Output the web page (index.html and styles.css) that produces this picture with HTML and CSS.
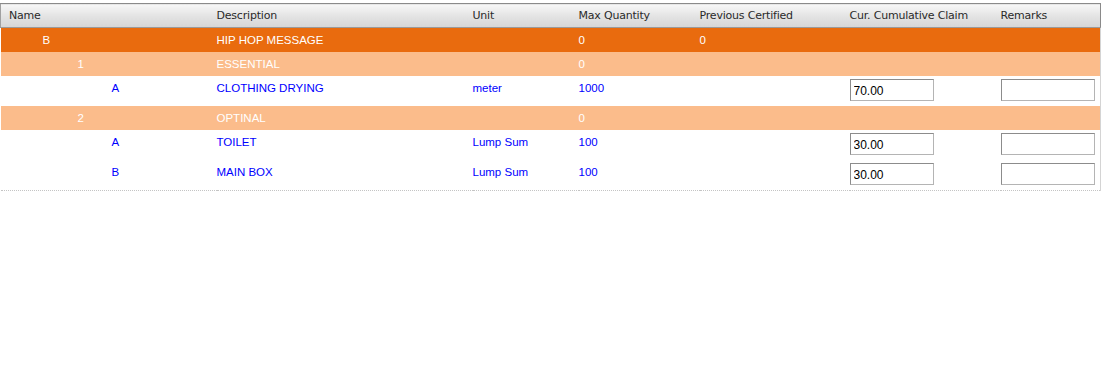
FILE: index.html
```html
<!DOCTYPE html>
<html>
<head>
<meta charset="utf-8">
<link rel="stylesheet" href="styles.css">
</head>
<body>
<table class="grid">
  <colgroup>
    <col class="c-name"><col class="c-desc"><col class="c-unit"><col class="c-max">
    <col class="c-prev"><col class="c-cur"><col class="c-rem">
  </colgroup>
  <thead>
    <tr>
      <th>Name</th><th>Description</th><th>Unit</th><th>Max Quantity</th>
      <th>Previous Certified</th><th>Cur. Cumulative Claim</th><th>Remarks</th>
    </tr>
  </thead>
  <tbody>
    <tr class="lvl-1">
      <td class="name n1">B</td><td>HIP HOP MESSAGE</td><td></td><td>0</td><td>0</td><td></td><td></td>
    </tr>
    <tr class="lvl-2">
      <td class="name n2">1</td><td>ESSENTIAL</td><td></td><td>0</td><td></td><td></td><td></td>
    </tr>
    <tr class="item">
      <td class="name n3">A</td><td>CLOTHING DRYING</td><td>meter</td><td>1000</td><td></td>
      <td class="field"><input class="claim" type="text" value="70.00"></td>
      <td class="field"><input class="remark" type="text" value=""></td>
    </tr>
    <tr class="lvl-2">
      <td class="name n2">2</td><td>OPTINAL</td><td></td><td>0</td><td></td><td></td><td></td>
    </tr>
    <tr class="item">
      <td class="name n3">A</td><td>TOILET</td><td>Lump Sum</td><td>100</td><td></td>
      <td class="field"><input class="claim" type="text" value="30.00"></td>
      <td class="field"><input class="remark" type="text" value=""></td>
    </tr>
    <tr class="item">
      <td class="name n3">B</td><td>MAIN BOX</td><td>Lump Sum</td><td>100</td><td></td>
      <td class="field"><input class="claim" type="text" value="30.00"></td>
      <td class="field"><input class="remark" type="text" value=""></td>
    </tr>
  </tbody>
</table>
</body>
</html>
```
FILE: styles.css
```css
html, body {
  margin: 0;
  padding: 0;
  background: #fff;
}

body {
  padding-top: 3px;
  font-family: "Liberation Sans", Arial, sans-serif;
  font-size: 11.5px;
}

.grid {
  width: 1100px;
  border-collapse: collapse;
  table-layout: fixed;
  border-right: 1px solid #d4d4d4;
  border-bottom: 1px dotted #c4c4c4;
}

.c-name { width: 216px; }
.c-desc { width: 256px; }
.c-unit { width: 106px; }
.c-max  { width: 121px; }
.c-prev { width: 150px; }
.c-cur  { width: 151px; }
.c-rem  { width: 100px; }

.grid thead th {
  height: 23px;
  padding: 0;
  text-align: left;
  font-family: "DejaVu Sans", sans-serif;
  font-weight: normal;
  font-size: 11px;
  letter-spacing: -0.2px;
  color: #2a2a2a;
  background: linear-gradient(#f7f7f7, #e2e2e2 55%, #d6d6d6);
  border-top: 1px solid #8a8a8a;
  border-bottom: 1px solid #9a9a9a;
  vertical-align: middle;
}

.grid thead th:first-child {
  padding-left: 8px;
  border-left: 1px solid #a0a0a0;
}

.grid thead th:last-child {
  border-right: 1px solid #8a8a8a;
}

.grid td {
  padding: 0;
  white-space: nowrap;
}

.lvl-1 td {
  height: 24px;
  background: #e96b0e;
  color: #fff;
}

.lvl-2 td {
  height: 24px;
  background: #fbbc8b;
  color: #fff;
}

.item td {
  height: 26px;
  color: #0000ff;
  vertical-align: top;
  padding-top: 4px;
  line-height: 16px;
}

.item td.field {
  padding-top: 3px;
  height: 27px;
  line-height: normal;
}

.name.n1 { padding-left: 42px; }
.name.n2 { padding-left: 77px; }
.name.n3 { padding-left: 111px; }

.grid input {
  display: block;
  box-sizing: border-box;
  height: 22px;
  margin: 0;
  padding: 1px 3px 0;
  font-family: "Liberation Sans", Arial, sans-serif;
  font-size: 12px;
  color: #000;
  background: #fff;
  border: 1px solid #8c8c8c;
  border-right-color: #b4b4b4;
  border-bottom-color: #b4b4b4;
  outline: none;
}

.grid input.claim {
  width: 84px;
}

.grid input.remark {
  width: 94px;
}
```
